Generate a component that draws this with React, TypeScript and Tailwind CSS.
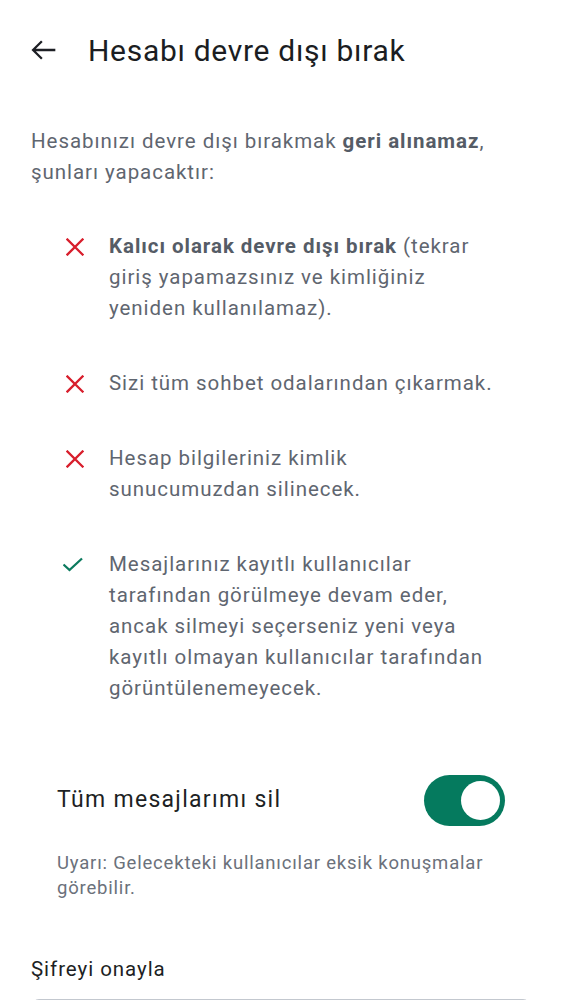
import React, { useState } from 'react';

const XIcon = () => (
  <svg width="18" height="18" viewBox="0 0 18 18" className="shrink-0" aria-hidden>
    <path d="M1.5 1.5 L16.5 16.5 M16.5 1.5 L1.5 16.5" stroke="#d81e2c" strokeWidth="2.3" strokeLinecap="square" fill="none" />
  </svg>
);

const CheckIcon = () => (
  <svg width="24" height="16" viewBox="0 0 24 16" className="shrink-0" aria-hidden>
    <path d="M0.5 7.5 L6.5 13 L19 1.5" stroke="#0b7a5e" strokeWidth="2.3" fill="none" />
  </svg>
);

const items: { ok: boolean; content: React.ReactNode }[] = [
  {
    ok: false,
    content: (
      <>
        <span className="font-bold text-[#555c66]">Kalıcı olarak devre dışı bırak</span> (tekrar giriş yapamazsınız ve kimliğiniz yeniden kullanılamaz).
      </>
    ),
  },
  { ok: false, content: 'Sizi tüm sohbet odalarından çıkarmak.' },
  { ok: false, content: 'Hesap bilgileriniz kimlik sunucumuzdan silinecek.' },
  {
    ok: true,
    content:
      'Mesajlarınız kayıtlı kullanıcılar tarafından görülmeye devam eder, ancak silmeyi seçerseniz yeni veya kayıtlı olmayan kullanıcılar tarafından görüntülenemeyecek.',
  },
];

export default function App() {
  const [erase, setErase] = useState(true);

  return (
    <div className="min-h-screen bg-white font-['Roboto','Liberation_Sans',sans-serif] px-[31px]">
      {/* Üst çubuk */}
      <header className="flex items-center h-[100px]">
        <button className="w-[26px] h-[26px] flex items-center justify-center">
          <svg width="32" height="32" viewBox="0 0 24 24" className="shrink-0" aria-hidden>
            <path d="M20.5 12H3.8 M10.4 5.4 L3.8 12 L10.4 18.6" stroke="#1d1f24" strokeWidth="1.7" fill="none" />
          </svg>
        </button>
        <h1 className="ml-[31px] text-[30px] tracking-[0.7px] text-[#1b1d22]">Hesabı devre dışı bırak</h1>
      </header>

      <p className="mt-[26px] text-[20.5px] leading-[31px] tracking-[0.95px] text-[#5f6670]">
        Hesabınızı devre dışı bırakmak <span className="font-bold text-[#555c66]">geri alınamaz</span>, şunları yapacaktır:
      </p>

      <ul className="mt-[43px] pl-[32px] pr-[28px] flex flex-col gap-[44px]">
        {items.map((it, i) => (
          <li key={i} className="flex items-start">
            <div className="w-[24px] h-[31px] shrink-0 flex items-center justify-center">
              {it.ok ? <CheckIcon /> : <XIcon />}
            </div>
            <div className="ml-[22px] text-[20.5px] leading-[31px] tracking-[0.95px] text-[#5f6670]">{it.content}</div>
          </li>
        ))}
      </ul>

      <div className="mt-[71px] px-[26px]">
        <div className="flex items-center justify-between">
          <span className="text-[23px] tracking-[1.3px] text-[#1d1f24]">Tüm mesajlarımı sil</span>
          <button
            onClick={() => setErase(!erase)}
            className={`w-[81px] h-[51px] rounded-full flex items-center px-[5px] ${erase ? 'bg-[#057a5e] justify-end' : 'bg-[#c5c9cf] justify-start'}`}
          >
            <span className="w-[39px] h-[39px] rounded-full bg-white block" />
          </button>
        </div>
        <p className="mt-[25px] text-[18.5px] leading-[25px] tracking-[0.8px] text-[#6b717b]">
          Uyarı: Gelecekteki kullanıcılar eksik konuşmalar görebilir.
        </p>
      </div>

      <label className="block mt-[53px] text-[20.5px] tracking-[0.95px] text-[#1d1f24]">Şifreyi onayla</label>
      <div className="mt-[14px] h-[56px] rounded-[8px] border border-[#c3c8cf]" />
    </div>
  );
}
